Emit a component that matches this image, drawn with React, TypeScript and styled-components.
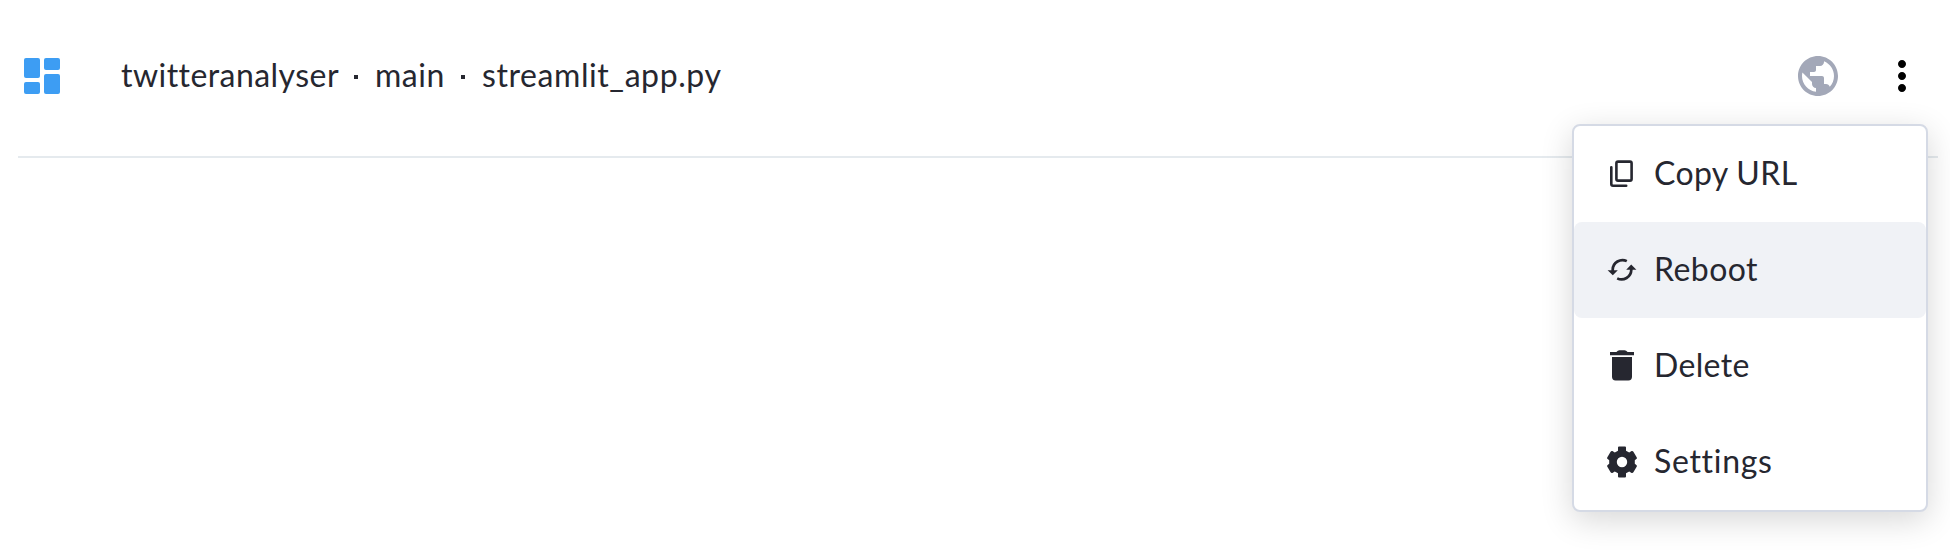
import React from "react";
import styled, { createGlobalStyle } from "styled-components";
import { MdPublic, MdMoreVert } from "react-icons/md";

const GlobalStyle = createGlobalStyle`
  * { box-sizing: border-box; }
  body {
    margin: 0;
    background: #ffffff;
    color: #262730;
    font-family: Lato, "Open Sans", sans-serif;
    font-size: 32px;
    line-height: 48px;
    font-variant-ligatures: none;
    overflow: hidden;
  }
`;

const Page = styled.main`
  position: relative;
  height: 552px;
  padding: 0 12px 0 18px;
`;

const Header = styled.header`
  display: flex;
  align-items: center;
  height: 158px;
  padding: 0 12px 4px 6px;
  border-bottom: 2px solid #e5eaee;
`;

const Logo = styled.svg`
  display: block;
  width: 36px;
  height: 36px;
  margin-right: 61px;
  fill: #3d9df3;
`;

const Word = styled.span<{ $width: number; $spacing: number }>`
  display: block;
  width: ${(p) => p.$width}px;
  padding-bottom: 2px;
  letter-spacing: ${(p) => p.$spacing}px;
  white-space: nowrap;
`;

const Crumbs = styled.nav`
  display: flex;
  flex: 1;
`;

const Dot = styled.span`
  width: 4px;
  height: 4px;
  margin: 24px 17px 0 16px;
  background: #262730;
`;

const Action = styled.button<{ $color: string }>`
  display: flex;
  padding: 0;
  margin-left: 36px;
  border: 0;
  background: none;
  color: ${(p) => p.$color};
  font-size: 48px;
`;

const Menu = styled.ul`
  position: absolute;
  top: 124px;
  right: 22px;
  width: 356px;
  margin: 0;
  padding: 0;
  list-style: none;
  background: #ffffff;
  border: 2px solid #d5dae5;
  border-radius: 8px;
  box-shadow: 0 8px 32px rgba(0, 0, 0, 0.16);
`;

const MenuItem = styled.li<{ $active?: boolean }>`
  display: flex;
  align-items: center;
  gap: 14px;
  height: 96px;
  padding: 0 30px;
  border-radius: 8px;
  background: ${(p) => (p.$active ? "#f0f2f6" : "transparent")};
`;

const Icon = styled.svg`
  display: block;
  width: 36px;
  height: 36px;
  fill: #262730;
`;

const CopyIcon = () => (
  <Icon viewBox="0 0 36 36">
    <g fill="none" stroke="#262730" strokeWidth="2.6" strokeLinejoin="round" strokeLinecap="round">
      <rect x="12.4" y="5.6" width="15.2" height="19" rx="1.6" />
      <path d="M7.3 11.2V28Q7.3 29.7 9 29.7H22.2" />
    </g>
  </Icon>
);

const RebootIcon = () => (
  <Icon viewBox="0 0 36 36">
    <g fill="none" stroke="#262730" strokeWidth="2.7">
      <path d="M22.8 9.1A9.8 9.8 0 0 0 8.7 17.6V20" />
      <path d="M13.2 26.4A9.8 9.8 0 0 0 27.3 17.9V15.5" />
    </g>
    <path d="M3.6 18.3H13.8L8.8 23.3ZM22.2 17.7H32.4L27.2 12.5Z" />
  </Icon>
);

const TrashIcon = () => (
  <Icon viewBox="0 0 36 36">
    <path d="M6 4H12.4Q13.8 2.2 15.4 2.2H20.6Q22.2 2.2 23.6 4H30V7.2H6ZM8 9H28V28.8Q28 32.4 24.4 32.4H11.6Q8 32.4 8 28.8Z" />
  </Icon>
);

const GearIcon = () => (
  <Icon viewBox="0 0 36 36">
    <path
      fillRule="evenodd"
      d="M14 3.6Q14 2.6 15 2.6H21Q22 2.6 22 3.6V6.8L25.2 8.4L27.6 7.1Q28.7 6.7 29.4 7.7L32.8 13.4Q33.3 14.4 32.3 15L30.8 16.2V19.8L32.3 21Q33.3 21.6 32.8 22.6L29.4 28.3Q28.7 29.3 27.6 28.9L25.2 27.6L22 29.2V32.4Q22 33.4 21 33.4H15Q14 33.4 14 32.4V29.2L10.8 27.6L8.4 28.9Q7.3 29.3 6.6 28.3L3.2 22.6Q2.7 21.6 3.7 21L5.2 19.8V16.2L3.7 15Q2.7 14.4 3.2 13.4L6.6 7.7Q7.3 6.7 8.4 7.1L10.8 8.4L14 6.8ZM18 12.8A5.2 5.2 0 1 0 18 23.2A5.2 5.2 0 1 0 18 12.8Z"
    />
  </Icon>
);

const items = [
  { label: "Copy URL", icon: CopyIcon, width: 142, spacing: 0.35 },
  { label: "Reboot", icon: RebootIcon, width: 102, spacing: 0.45 },
  { label: "Delete", icon: TrashIcon, width: 94, spacing: 0.35 },
  { label: "Settings", icon: GearIcon, width: 116, spacing: 0.7 },
];

export default function App() {
  return (
    <Page>
      <GlobalStyle />
      <Header>
        <Logo viewBox="0 0 36 36">
          <rect width="16" height="20" rx="2" />
          <rect y="24" width="16" height="12" rx="2" />
          <rect x="20" width="16" height="12" rx="2" />
          <rect x="20" y="16" width="16" height="20" rx="2" />
        </Logo>
        <Crumbs>
          <Word $width={217} $spacing={0.45}>twitteranalyser</Word>
          <Dot />
          <Word $width={70} $spacing={0.5}>main</Word>
          <Dot />
          <Word $width={240} $spacing={0.58}>streamlit_app.py</Word>
        </Crumbs>
        <Action $color="#a3a8b8" aria-label="Visibility"><MdPublic /></Action>
        <Action $color="#000000" aria-label="More"><MdMoreVert /></Action>
      </Header>
      <Menu>
        {items.map(({ label, icon: Glyph, width, spacing }) => (
          <MenuItem key={label} $active={label === "Reboot"}>
            <Glyph />
            <Word $width={width} $spacing={spacing}>{label}</Word>
          </MenuItem>
        ))}
      </Menu>
    </Page>
  );
}
